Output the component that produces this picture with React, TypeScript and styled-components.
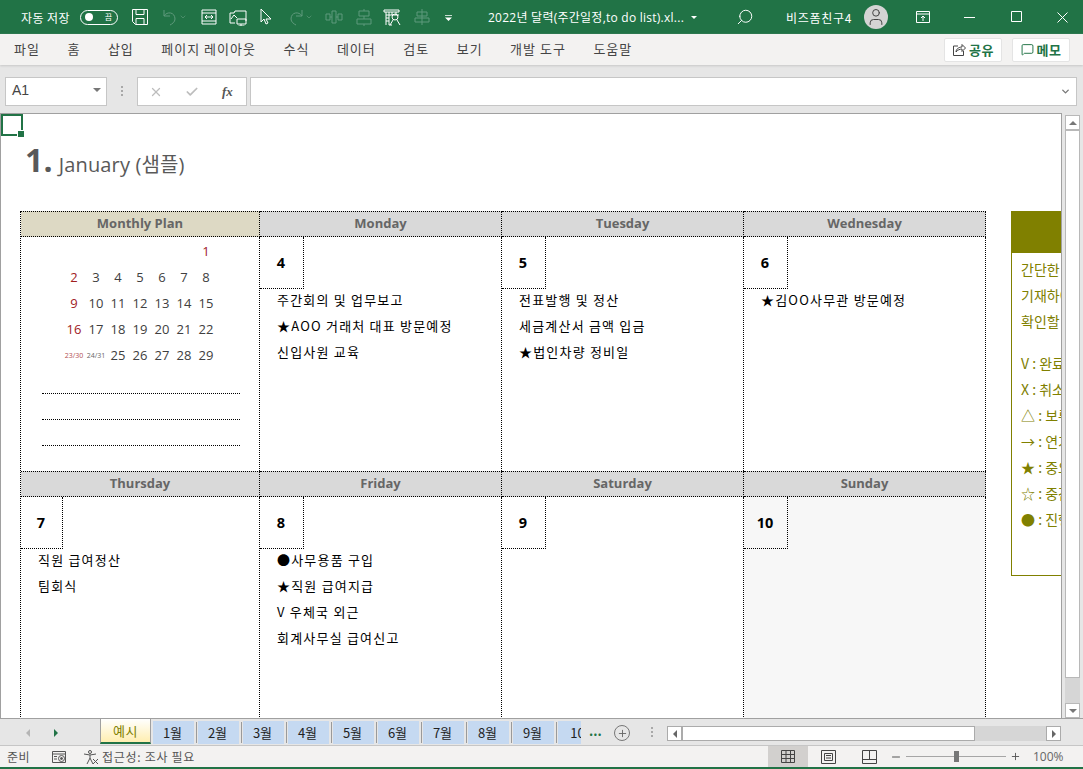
import React from "react";
import styled, { createGlobalStyle } from "styled-components";
import { ChevronDown, Search, User, X, Check, MessageSquare, Plus, Minus } from "lucide-react";

const SANS = `"Open Sans", "Noto Sans CJK KR", sans-serif`;
const KR = `"Noto Sans CJK KR", "Open Sans", sans-serif`;

const Global = createGlobalStyle`
  html, body { margin: 0; padding: 0; background: #fff; overflow: hidden; }
  * { box-sizing: border-box; }
  #root { width: 1083px; height: 769px; font-family: ${KR}; }
`;

const Window = styled.div`
  width: 1083px;
  height: 769px;
  display: flex;
  flex-direction: column;
  overflow: hidden;
  border-bottom: 2px solid #217346;
`;

/* 타이틀바 */
const TitleBar = styled.div`
  height: 34px;
  flex: none;
  background: #217346;
  color: #fff;
  display: flex;
  align-items: center;
  padding-left: 21px;
  font-size: 12px;
`;

const AutoSave = styled.span`
  width: 59px;
  font-size: 12px;
  letter-spacing: 0.4px;
  white-space: nowrap;
`;

const Toggle = styled.span`
  width: 38px;
  height: 15px;
  border: 1px solid #fff;
  border-radius: 8px;
  display: flex;
  align-items: center;
  justify-content: space-between;
  padding: 0 5px 0 4px;
  font-size: 8px;
  line-height: 1;
  margin-right: 13px;
  &::before {
    content: "";
    width: 8px;
    height: 8px;
    border-radius: 50%;
    background: #fff;
  }
`;

const QuickIcon = styled.svg<{ $gap: number; $dim?: boolean }>`
  width: 18px;
  height: 18px;
  flex: none;
  margin-right: ${(p) => p.$gap}px;
  fill: none;
  stroke: currentColor;
  stroke-width: 1;
  color: ${(p) => (p.$dim ? "#5f9a7c" : "#fff")};
`;

const QuickMore = styled.svg`
  width: 7px;
  height: 7px;
  flex: none;
  margin-right: 36px;
  fill: #fff;
`;

const FileName = styled.span`
  width: 203px;
  font-family: ${SANS};
  font-size: 12px;
  letter-spacing: 0.25px;
  white-space: nowrap;
`;

const UserName = styled.span`
  width: 78px;
  font-size: 12px;
  letter-spacing: 0.7px;
  white-space: nowrap;
`;

const Avatar = styled.span`
  width: 24px;
  height: 24px;
  border-radius: 50%;
  background: #d4d4d4;
  color: #444;
  display: flex;
  align-items: center;
  justify-content: center;
  margin-right: 28px;
`;

const WindowIcon = styled.svg<{ $gap: number }>`
  flex: none;
  margin-right: ${(p) => p.$gap}px;
  fill: none;
  stroke: #fff;
  stroke-width: 1;
`;

/* 메뉴 */
const MenuBar = styled.div`
  height: 31px;
  flex: none;
  background: #f3f2f1;
  display: flex;
  align-items: center;
  padding: 0 13px 0 14px;
  box-shadow: 0 1px 2px #c8c8c8;
  position: relative;
  z-index: 1;
`;

const MenuItem = styled.span`
  font-size: 13px;
  letter-spacing: 1px;
  color: #444;
  margin: 0 27.5px 2px 0;
  white-space: nowrap;
`;

const MenuRight = styled.div`
  margin-left: auto;
  display: flex;
  gap: 10px;
`;

const PillButton = styled.span`
  width: 58px;
  height: 24px;
  background: #fff;
  border: 1px solid #e4e4e4;
  border-radius: 2px;
  display: flex;
  align-items: center;
  justify-content: center;
  gap: 3px;
  font-size: 13px;
  letter-spacing: 0.5px;
  font-weight: 700;
  color: #217346;
`;

const ShareIcon = styled.svg`
  flex: none;
  fill: none;
  stroke: #444;
  stroke-width: 1;
`;

/* 수식 입력줄 */
const FormulaRow = styled.div`
  height: 48px;
  flex: none;
  background: #e6e6e6;
  display: flex;
  align-items: flex-start;
  padding: 12px 6px 0 5px;
`;

const Field = styled.div<{ $w?: number }>`
  width: ${(p) => (p.$w ? `${p.$w}px` : "auto")};
  flex: ${(p) => (p.$w ? "none" : 1)};
  height: 29px;
  background: #fff;
  border: 1px solid #c6c6c6;
  display: flex;
  align-items: center;
`;

const NameBox = styled(Field)`
  font-family: "Liberation Sans", sans-serif;
  font-size: 14px;
  color: #444;
  padding: 0 5px 4px 6px;
  justify-content: space-between;
`;

const Caret = styled.span<{ $color?: string }>`
  width: 0;
  height: 0;
  border-left: 4px solid transparent;
  border-right: 4px solid transparent;
  border-top: 4px solid ${(p) => p.$color ?? "#777"};
`;

const TitleCaret = styled(Caret)`
  border-width: 3px 3px 0;
  margin-right: 39px;
`;

const Grip = styled.span<{ $h?: number }>`
  width: 2px;
  height: ${(p) => p.$h ?? 11}px;
  flex: none;
  background: repeating-linear-gradient(#a8a8a8 0 2px, transparent 2px 4px);
`;

const GripBox = styled.div`
  width: 30px;
  height: 29px;
  display: flex;
  align-items: center;
  justify-content: center;
`;

const FxBox = styled(Field)`
  margin-right: 3px;
  padding-left: 11px;
  gap: 22px;
  color: #bdbdbd;
`;

const Fx = styled.span`
  font-family: "Liberation Serif", serif;
  font-style: italic;
  font-weight: 700;
  font-size: 13px;
  color: #555;
  margin-left: 1px;
`;

const FormulaInput = styled(Field)`
  justify-content: flex-end;
  padding-right: 5px;
  color: #777;
`;

/* 시트 */
const SheetRow = styled.div`
  height: 605px;
  flex: none;
  display: flex;
  background: #e6e6e6;
`;

const Sheet = styled.div`
  width: 1062px;
  flex: none;
  position: relative;
  overflow: hidden;
  background: #fff;
  border-top: 1px solid #a0a0a0;
  border-left: 1px solid #a0a0a0;
  border-right: 1px solid #a0a0a0;
  padding: 21px 0 0 19px;
`;

const Selection = styled.div`
  position: absolute;
  left: 0;
  top: 0;
  width: 22px;
  height: 22px;
  border: 2px solid #217346;
  &::after {
    content: "";
    position: absolute;
    right: -3px;
    bottom: -3px;
    width: 6px;
    height: 6px;
    background: #217346;
    outline: 1px solid #fff;
  }
`;

const Heading = styled.h1`
  margin: 0 0 0 5px;
  height: 76px;
  font-weight: 400;
  font-family: ${SANS};
  color: #595959;
  font-size: 20px;
  letter-spacing: 0.15px;
  line-height: 50px;
  white-space: nowrap;
`;

const HeadingNo = styled.b`
  font-size: 32px;
  margin-right: 6px;
`;

const Board = styled.div`
  display: flex;
  align-items: flex-start;
`;

const Calendar = styled.div`
  flex: none;
  display: grid;
  grid-template-columns: 239px 242px 242px 242px;
  grid-template-rows: 26px 234px 26px 234px;
  border-left: 1px dotted #000;
  width: 966px;
`;

const DayHead = styled.div<{ $tone?: string }>`
  background: ${(p) => p.$tone ?? "#d9d9d9"};
  border-top: 1px dotted #000;
  border-right: 1px dotted #000;
  border-bottom: 1px dotted #000;
  font-family: ${SANS};
  font-size: 13px;
  font-weight: 700;
  color: #666;
  display: flex;
  align-items: center;
  justify-content: center;
  padding-bottom: 2px;
`;

const DayCell = styled.div<{ $shade?: boolean }>`
  background: ${(p) => (p.$shade ? "#f7f7f7" : "#fff")};
  border-right: 1px dotted #000;
  color: #000;
`;

const DateBox = styled.div<{ $w?: number }>`
  width: ${(p) => p.$w ?? 44}px;
  height: 52px;
  border-right: 1px dotted #000;
  border-bottom: 1px dotted #000;
  display: flex;
  align-items: center;
  justify-content: center;
  font-family: ${SANS};
  font-size: 14.5px;
  font-weight: 700;
  padding-right: 1px;
`;

const Plans = styled.ul`
  list-style: none;
  margin: -2px 0 0;
  padding: 0 0 0 17px;
`;

const Plan = styled.li`
  height: 26px;
  line-height: 26px;
  white-space: nowrap;
  font-size: 13px;
  letter-spacing: 1.2px;
`;

const MiniMonth = styled.div`
  padding-top: 1px;
`;

const MiniWeek = styled.div`
  display: grid;
  grid-template-columns: repeat(7, 22px);
  padding-left: 42px;
  height: 26px;
  align-items: center;
`;

const MiniDay = styled.span<{ $red?: boolean; $tiny?: boolean }>`
  text-align: center;
  font-family: ${SANS};
  font-size: ${(p) => (p.$tiny ? "7px" : "13px")};
  color: ${(p) => (p.$red ? "#a0201e" : "#404040")};
  opacity: ${(p) => (p.$tiny ? 0.8 : 1)};
  white-space: nowrap;
`;

const WriteLine = styled.div`
  height: 26px;
  margin: 0 19px 0 21px;
  border-bottom: 1px dotted #000;
`;

const Note = styled.aside`
  flex: none;
  width: 300px;
  height: 365px;
  margin-left: 25px;
  border: 1px solid #808000;
  font-size: 14px;
  color: #808000;
`;

const NoteHead = styled.div`
  height: 42px;
  margin: -1px -1px 0;
  background: #808000;
`;

const NoteBody = styled.div`
  padding: 3px 0 0 9px;
`;

const NoteLine = styled.div`
  height: 26px;
  line-height: 26px;
  white-space: nowrap;
`;

const NoteGap = styled.div`
  height: 16px;
`;

/* 세로 스크롤바 */
const VScroll = styled.div`
  flex: 1;
  display: flex;
  flex-direction: column;
  align-items: center;
  padding-top: 2px;
`;

const VButton = styled.div`
  width: 15px;
  height: 15px;
  background: #fff;
  border: 1px solid #b8b8b8;
  display: flex;
  align-items: center;
  justify-content: center;
  flex: none;
`;

const VThumb = styled.div`
  width: 15px;
  height: 548px;
  flex: none;
  background: #fff;
  border: 1px solid #b8b8b8;
`;

const VTrack = styled.div`
  flex: 1;
  width: 15px;
  background: #d6d6d6;
`;

const CaretUp = styled.span`
  width: 0;
  height: 0;
  border-left: 4px solid transparent;
  border-right: 4px solid transparent;
  border-bottom: 4px solid #777;
`;

/* 시트 탭 */
const TabBar = styled.div`
  height: 28px;
  flex: none;
  background: #e6e6e6;
  display: flex;
  align-items: flex-start;
  border-top: 1px solid #a0a0a0;
  border-bottom: 1px solid #c6c6c6;
`;

const TabNav = styled.div`
  width: 100px;
  height: 27px;
  flex: none;
  display: flex;
  align-items: center;
  padding-left: 26px;
  gap: 24px;
`;

const Tri = styled.span<{ $left?: boolean; $color: string }>`
  width: 0;
  height: 0;
  border-top: 4px solid transparent;
  border-bottom: 4px solid transparent;
  ${(p) => (p.$left ? "border-right" : "border-left")}: 4px solid ${(p) => p.$color};
`;

const ActiveTab = styled.div`
  width: 51px;
  height: 26px;
  margin-top: -1px;
  background: linear-gradient(#ffffff, #ffeeb0);
  border: 1px solid #a0a0a0;
  border-bottom: 2px solid #217346;
  color: #808000;
  font-size: 13px;
  letter-spacing: 0.5px;
  display: flex;
  align-items: center;
  justify-content: center;
  flex: none;
`;

const Tabs = styled.div`
  display: flex;
  width: 430px;
  flex: none;
  overflow: hidden;
  padding-top: 2px;
  padding-left: 2px;
`;

const Tab = styled.div`
  width: 45px;
  height: 23px;
  flex: none;
  display: flex;
  align-items: center;
  justify-content: center;
  position: relative;
  font-size: 13px;
  color: #222;
  &::before {
    content: "";
    position: absolute;
    left: 0;
    top: 0;
    bottom: 0;
    width: 41px;
    background: #c5d9f1;
  }
  &::after {
    content: "";
    position: absolute;
    right: 1px;
    top: 1px;
    bottom: 1px;
    width: 1px;
    background: #9a9a9a;
  }
`;

const TabLabel = styled.span`
  position: relative;
  margin-right: 6px;
`;

const More = styled.span`
  width: 33px;
  flex: none;
  font-weight: 700;
  color: #217346;
  font-size: 13px;
  line-height: 24px;
  padding-left: 8px;
`;

const AddSheet = styled.span`
  width: 16px;
  height: 16px;
  flex: none;
  margin-top: 6px;
  border: 1.5px solid #777;
  border-radius: 50%;
  color: #666;
  display: flex;
  align-items: center;
  justify-content: center;
`;

const TabGrip = styled.div`
  width: 37px;
  height: 26px;
  flex: none;
  display: flex;
  align-items: center;
  justify-content: center;
  padding-left: 6px;
`;

const HScroll = styled.div`
  width: 394px;
  height: 15px;
  margin-top: 7px;
  flex: none;
  display: flex;
  background: #d6d6d6;
`;

const HButton = styled.div`
  width: 15px;
  height: 15px;
  flex: none;
  background: #fff;
  border: 1px solid #ababab;
  display: flex;
  align-items: center;
  justify-content: center;
`;

const HThumb = styled.div`
  width: 293px;
  height: 15px;
  flex: none;
  background: #fff;
  border: 1px solid #ababab;
`;

const HTrack = styled.div`
  flex: 1;
`;

/* 상태 표시줄 */
const StatusBar = styled.div`
  height: 21px;
  flex: none;
  background: #f3f2f1;
  display: flex;
  align-items: center;
  padding: 0 12px 0 7px;
  font-size: 12px;
  color: #555;
`;

const StatusText = styled.span<{ $w: number; $ls?: number }>`
  width: ${(p) => p.$w}px;
  flex: none;
  letter-spacing: ${(p) => p.$ls ?? 0}px;
  white-space: nowrap;
`;

const StatusIcon = styled.svg<{ $gap: number }>`
  width: 16px;
  height: 16px;
  flex: none;
  margin-right: ${(p) => p.$gap}px;
  fill: none;
  stroke: #555;
  stroke-width: 1;
`;

const ViewGroup = styled.div`
  margin-left: auto;
  display: flex;
  align-items: center;
  height: 100%;
`;

const ViewButton = styled.span<{ $on?: boolean; $w: number }>`
  width: ${(p) => p.$w}px;
  height: 100%;
  background: ${(p) => (p.$on ? "#d2d0ce" : "transparent")};
  display: flex;
  align-items: center;
  justify-content: center;
`;

const ZoomSlider = styled.div`
  width: 100px;
  height: 1px;
  background: #a6a6a6;
  margin: 0 4px;
  display: flex;
  justify-content: center;
  align-items: center;
`;

const ZoomKnob = styled.span`
  width: 5px;
  height: 11px;
  background: #777;
`;

const ZoomPct = styled.span`
  width: 50px;
  padding-left: 12px;
  font-family: ${SANS};
  font-size: 12px;
  color: #666;
`;

const menus = ["파일", "홈", "삽입", "페이지 레이아웃", "수식", "데이터", "검토", "보기", "개발 도구", "도움말"];
const months = ["1월", "2월", "3월", "4월", "5월", "6월", "7월", "8월", "9월", "10"];

type Day = { t: string; red?: boolean; tiny?: boolean };
const d = (t: string, red?: boolean, tiny?: boolean): Day => ({ t, red, tiny });
const weeks: Day[][] = [
  [d(""), d(""), d(""), d(""), d(""), d(""), d("1", true)],
  [d("2", true), d("3"), d("4"), d("5"), d("6"), d("7"), d("8")],
  [d("9", true), d("10"), d("11"), d("12"), d("13"), d("14"), d("15")],
  [d("16", true), d("17"), d("18"), d("19"), d("20"), d("21"), d("22")],
  [d("23/30", true, true), d("24/31", false, true), d("25"), d("26"), d("27"), d("28"), d("29")],
];

const notes = ["V : 완료", "X : 취소", "△ : 보류", "→ : 연기", "★ : 중요", "☆ : 중간", "● : 진행"];

export default function App() {
  return (
    <Window>
      <Global />
      <TitleBar>
        <AutoSave>자동 저장</AutoSave>
        <Toggle>끔</Toggle>
        <QuickIcon $gap={12} viewBox="0 0 18 18">
          <path d="M1.500 1.500h15v15h-12l-3-3zM5 1.500v5h8v-5M5 16.500v-6h8v6" />
        </QuickIcon>
        <QuickIcon $gap={0} $dim viewBox="0 0 18 18">
          <path d="M3 2v6h6M3 8c3-5 11-4 11 3 0 3-3 5-5 6" />
        </QuickIcon>
        <ChevronDown size={8} color="#5f9a7c" style={{ marginRight: 13 }} />
        <QuickIcon $gap={11} viewBox="0 0 18 18">
          <path d="M2 2h14v14H2zM2 5h14M2 13h14M5 9h8M5 9l2-2M5 9l2 2M13 9l-2-2M13 9l-2 2" />
        </QuickIcon>
        <QuickIcon $gap={10} viewBox="0 0 18 18">
          <path d="M6 15H1V5h4l1-2h11v10M2 11l3-4 3 3M8 11h9v5H8zM12 16v2M9.500 18h6" />
        </QuickIcon>
        <QuickIcon $gap={12} viewBox="0 0 18 18">
          <path d="M4 1v13l3-3 2 5 2-1-2-4h5z" />
        </QuickIcon>
        <QuickIcon $gap={0} $dim viewBox="0 0 18 18">
          <path d="M15 2v6H9M15 8C12 3 4 4 4 11c0 3 3 5 5 6" />
        </QuickIcon>
        <ChevronDown size={8} color="#5f9a7c" style={{ marginRight: 12 }} />
        <QuickIcon $gap={12} $dim viewBox="0 0 18 18">
          <path d="M1 6h4v6H1zM7 3h4v12H7zM13 6h4v6h-4zM5 9h2M11 9h2" />
        </QuickIcon>
        <QuickIcon $gap={10} $dim viewBox="0 0 18 18">
          <path d="M4 3h10v5H4zM2 11h14v5H2zM9 1v2M9 8v3M9 16v2" />
        </QuickIcon>
        <QuickIcon $gap={12} viewBox="0 0 18 18">
          <path d="M1 2h15v2H1zM3 4v13M3 7h13M3 10h3M3 13h3M6 4v13h3M9 4v3M13 4v3M9 9a3 3 0 1 0 6 0 3 3 0 1 0-6 0M10 12l-3 5M14 12l3 5" />
        </QuickIcon>
        <QuickIcon $gap={14} $dim viewBox="0 0 18 18">
          <path d="M9 1v16M4 4h10v4H4zM2 10h14v4H2z" />
        </QuickIcon>
        <QuickMore viewBox="0 0 8 8">
          <path d="M0 1h8v1H0zM0 4h8L4 8z" />
        </QuickMore>
        <FileName>2022년 달력(주간일정,to do list).xl...</FileName>
        <TitleCaret $color="#fff" />
        <Search size={18} strokeWidth={1.3} style={{ transform: "scaleX(-1)", marginRight: 32 }} />
        <UserName>비즈폼친구4</UserName>
        <Avatar>
          <User size={20} strokeWidth={1.2} />
        </Avatar>
        <WindowIcon $gap={34} width="14" height="12" viewBox="0 0 14 12">
          <path d="M.5.500h13v11H.5zM.5 3h13M7 10V5M5 7l2-2 2 2" />
        </WindowIcon>
        <WindowIcon $gap={36} width="11" height="11" viewBox="0 0 11 11">
          <path d="M0 5.500h11" />
        </WindowIcon>
        <WindowIcon $gap={34} width="12" height="12" viewBox="0 0 12 12">
          <path d="M.5.500h10v10H.5z" />
        </WindowIcon>
        <WindowIcon $gap={0} width="11" height="11" viewBox="0 0 11 11">
          <path d="M.5.500l10 10M10.500 .500l-10 10" />
        </WindowIcon>
      </TitleBar>

      <MenuBar>
        {menus.map((m) => (
          <MenuItem key={m}>{m}</MenuItem>
        ))}
        <MenuRight>
          <PillButton>
            <ShareIcon width="14" height="14" viewBox="0 0 14 14">
              <path d="M6 3H1.500v9.500h10V8M4 9c0-3 3-5 6-5V1.500L13.500 5 10 8.500V6C8 6 5.500 7 4 9z" />
            </ShareIcon>
            공유
          </PillButton>
          <PillButton>
            <MessageSquare size={13} strokeWidth={1.8} color="#217346" />
            메모
          </PillButton>
        </MenuRight>
      </MenuBar>

      <FormulaRow>
        <NameBox $w={102}>
          A1
          <Caret />
        </NameBox>
        <GripBox>
          <Grip />
        </GripBox>
        <FxBox $w={110}>
          <X size={14} strokeWidth={2.2} />
          <Check size={14} strokeWidth={3} />
          <Fx>fx</Fx>
        </FxBox>
        <FormulaInput>
          <ChevronDown size={11} strokeWidth={3} />
        </FormulaInput>
      </FormulaRow>

      <SheetRow>
        <Sheet>
          <Selection />
          <Heading>
            <HeadingNo>1.</HeadingNo>January (샘플)
          </Heading>
          <Board>
            <Calendar>
              <DayHead $tone="#ddd9c4">Monthly Plan</DayHead>
              <DayHead>Monday</DayHead>
              <DayHead>Tuesday</DayHead>
              <DayHead>Wednesday</DayHead>

              <DayCell>
                <MiniMonth>
                  {weeks.map((w, i) => (
                    <MiniWeek key={i}>
                      {w.map((x, j) => (
                        <MiniDay key={j} $red={x.red} $tiny={x.tiny}>
                          {x.t}
                        </MiniDay>
                      ))}
                    </MiniWeek>
                  ))}
                </MiniMonth>
                <WriteLine />
                <WriteLine />
                <WriteLine />
              </DayCell>
              <DayCell>
                <DateBox>4</DateBox>
                <Plans>
                  <Plan>주간회의 및 업무보고</Plan>
                  <Plan>★AOO 거래처 대표 방문예정</Plan>
                  <Plan>신입사원 교육</Plan>
                </Plans>
              </DayCell>
              <DayCell>
                <DateBox>5</DateBox>
                <Plans>
                  <Plan>전표발행 및 정산</Plan>
                  <Plan>세금계산서 금액 입금</Plan>
                  <Plan>★법인차량 정비일</Plan>
                </Plans>
              </DayCell>
              <DayCell>
                <DateBox>6</DateBox>
                <Plans>
                  <Plan>★김OO사무관 방문예정</Plan>
                </Plans>
              </DayCell>

              <DayHead>Thursday</DayHead>
              <DayHead>Friday</DayHead>
              <DayHead>Saturday</DayHead>
              <DayHead>Sunday</DayHead>

              <DayCell>
                <DateBox $w={42}>7</DateBox>
                <Plans>
                  <Plan>직원 급여정산</Plan>
                  <Plan>팀회식</Plan>
                </Plans>
              </DayCell>
              <DayCell>
                <DateBox>8</DateBox>
                <Plans>
                  <Plan>●사무용품 구입</Plan>
                  <Plan>★직원 급여지급</Plan>
                  <Plan>V 우체국 외근</Plan>
                  <Plan>회계사무실 급여신고</Plan>
                </Plans>
              </DayCell>
              <DayCell>
                <DateBox>9</DateBox>
              </DayCell>
              <DayCell $shade>
                <DateBox>10</DateBox>
              </DayCell>
            </Calendar>
            <Note>
              <NoteHead />
              <NoteBody>
                <NoteLine>간단한 메모를</NoteLine>
                <NoteLine>기재하여</NoteLine>
                <NoteLine>확인할 수 있습니다</NoteLine>
                <NoteGap />
                {notes.map((n) => (
                  <NoteLine key={n}>{n}</NoteLine>
                ))}
              </NoteBody>
            </Note>
          </Board>
        </Sheet>
        <VScroll>
          <VButton>
            <CaretUp />
          </VButton>
          <VThumb />
          <VTrack />
          <VButton>
            <Caret />
          </VButton>
        </VScroll>
      </SheetRow>

      <TabBar>
        <TabNav>
          <Tri $left $color="#b5b5b5" />
          <Tri $color="#217346" />
        </TabNav>
        <ActiveTab>예시</ActiveTab>
        <Tabs>
          {months.map((m) => (
            <Tab key={m}>
              <TabLabel>{m}</TabLabel>
            </Tab>
          ))}
        </Tabs>
        <More>...</More>
        <AddSheet>
          <Plus size={11} strokeWidth={2} />
        </AddSheet>
        <TabGrip>
          <Grip $h={10} />
        </TabGrip>
        <HScroll>
          <HButton>
            <Tri $left $color="#666" />
          </HButton>
          <HThumb />
          <HTrack />
          <HButton>
            <Tri $color="#666" />
          </HButton>
        </HScroll>
      </TabBar>

      <StatusBar>
        <StatusText $w={44} $ls={0.5}>준비</StatusText>
        <StatusIcon $gap={16} viewBox="0 0 16 16">
          <path d="M1.500 2.500h13v11h-13zM1.500 5h13M3 7.500h3M3 10h3" />
          <circle cx="10.500" cy="9.500" r="3" />
          <circle cx="10.500" cy="9.500" r="1" fill="#555" />
        </StatusIcon>
        <StatusIcon $gap={3} viewBox="0 0 16 16">
          <circle cx="7" cy="3" r="1.500" />
          <path d="M1 5l6 1 6-1M7 6v3l-3 6M7 9l3 6M10 10l5 5M15 10l-5 5" />
        </StatusIcon>
        <StatusText $w={110} $ls={0.7}>접근성: 조사 필요</StatusText>
        <ViewGroup>
          <ViewButton $on $w={40}>
            <svg width="14" height="13" viewBox="0 0 14 13" fill="none" stroke="#444">
              <path d="M.5.500h13v12H.5zM.5 4.500h13M.5 8.500h13M5 .500v12M9.500 .500v12" />
            </svg>
          </ViewButton>
          <ViewButton $w={41}>
            <svg width="15" height="14" viewBox="0 0 15 14" fill="none" stroke="#444">
              <path d="M.5.500h14v13H.5zM3.500 3.500h8v7h-8zM5 5.500h5M5 8h5" />
            </svg>
          </ViewButton>
          <ViewButton $w={40}>
            <svg width="15" height="14" viewBox="0 0 15 14" fill="none" stroke="#444">
              <path d="M.5.500h14v13H.5zM.5 9.500h14M7.500 .500v9" />
            </svg>
          </ViewButton>
          <Minus size={12} color="#555" style={{ marginLeft: 1 }} />
          <ZoomSlider>
            <ZoomKnob />
          </ZoomSlider>
          <Plus size={11} color="#555" />
          <ZoomPct>100%</ZoomPct>
        </ViewGroup>
      </StatusBar>
    </Window>
  );
}
